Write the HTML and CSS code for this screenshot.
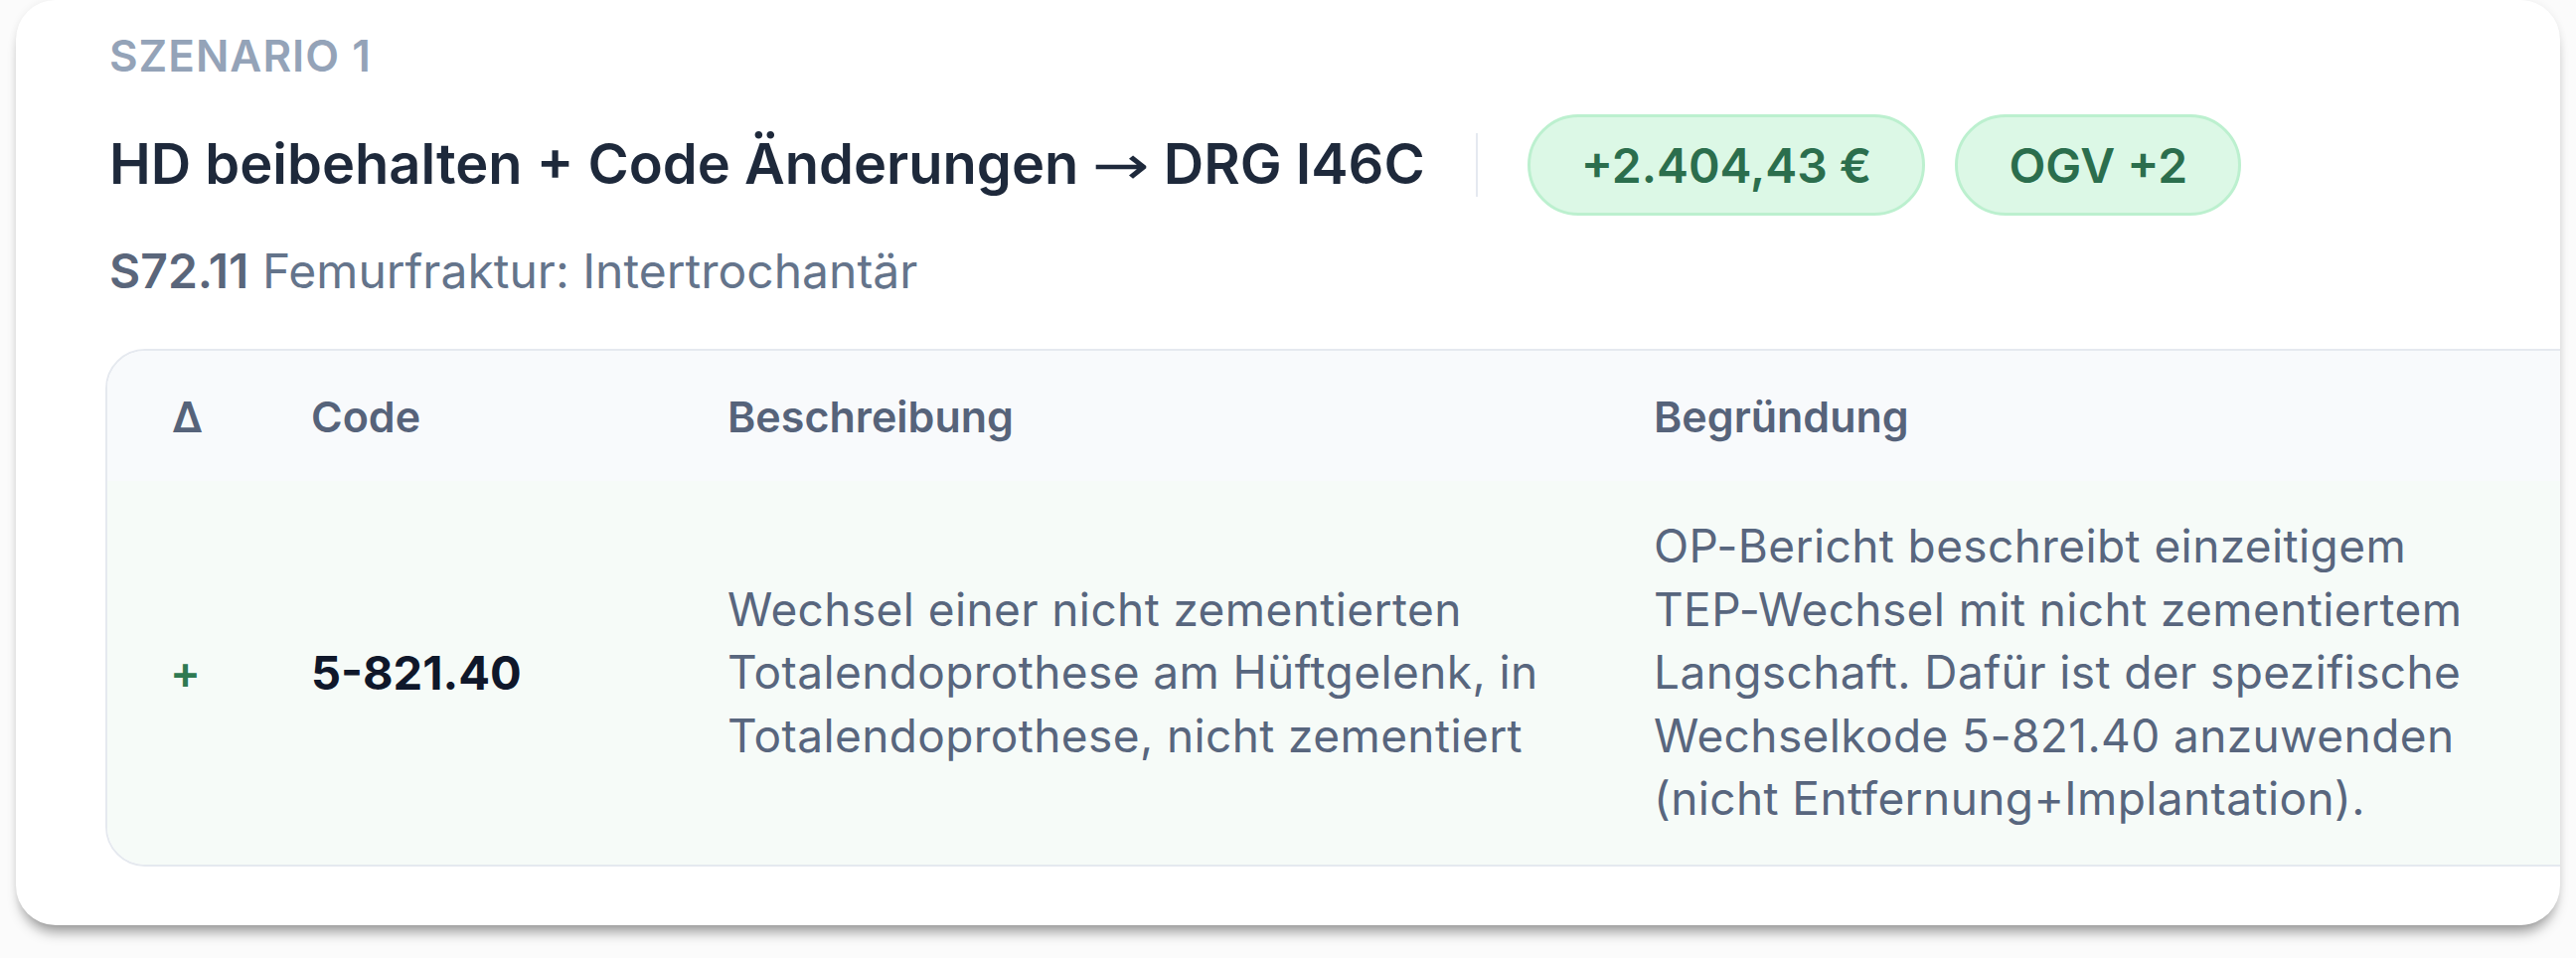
FILE: index.html
```html
<!DOCTYPE html>
<html lang="de">
<head>
<meta charset="utf-8">
<title>Szenario 1</title>
<link rel="stylesheet" href="styles.css">
</head>
<body>
<section class="card">
  <div class="head">
    <div class="eyebrow">SZENARIO 1</div>
    <div class="title-row">
      <h2 class="title">HD beibehalten + Code Änderungen <span class="arrow">→</span> DRG I46C</h2>
      <span class="divider"></span>
      <span class="badge">+2.404,43 €</span>
      <span class="badge">OGV +2</span>
    </div>
    <div class="subtitle"><strong>S72.11</strong> Femurfraktur: Intertrochantär</div>
  </div>
  <div class="table">
    <div class="tr th">
      <div class="cell c-delta">Δ</div>
      <div class="cell c-code">Code</div>
      <div class="cell c-desc">Beschreibung</div>
      <div class="cell c-reason">Begründung</div>
    </div>
    <div class="tr td">
      <div class="cell c-delta plus">+</div>
      <div class="cell c-code code">5-821.40</div>
      <div class="cell c-desc">Wechsel einer nicht zementierten Totalendoprothese am Hüftgelenk, in Totalendoprothese, nicht zementiert</div>
      <div class="cell c-reason">OP-Bericht beschreibt einzeitigem TEP-&#8288;Wechsel mit nicht zementiertem Langschaft. Dafür ist der spezifische Wechselkode 5-821.40 anzuwenden (nicht Entfernung+Implantation).</div>
    </div>
  </div>
</section>
</body>
</html>
```

FILE: styles.css
```css
* { box-sizing: border-box; }
html, body { margin: 0; padding: 0; }
body {
  background: #fbfbfb;
  font-family: Inter, "Noto Sans", "Liberation Sans", sans-serif;
  width: 2592px;
  height: 964px;
  overflow: hidden;
}
.card {
  margin-left: 16px;
  width: 2560px;
  height: 931px;
  background: #ffffff;
  border-radius: 40px;
  box-shadow: 0 12px 14px -6px rgba(0,0,0,0.42), 0 0 8px rgba(0,0,0,0.06);
  padding: 26px 0 0 90px;
  overflow: hidden;
}
.head { padding-left: 4px; }
.eyebrow {
  font-size: 44px;
  line-height: 60px;
  height: 60px;
  font-weight: 600;
  color: #94a3b8;
  letter-spacing: 1px;
}
.title-row {
  margin-top: 29px;
  height: 102px;
  display: flex;
  align-items: center;
}
.title {
  margin: 0;
  font-size: 56px;
  line-height: 72px;
  font-weight: 600;
  color: #1e293b;
  white-space: nowrap;
}
.arrow {
  display: inline-block;
  font-family: "DejaVu Sans", sans-serif;
  font-weight: 400;
  font-size: 54px;
  transform: scaleX(1.28);
  margin: 0 6px;
}
.divider {
  width: 2px;
  height: 64px;
  background: #e5e9f0;
  margin: 0 50px 0 51px;
}
.badge {
  height: 102px;
  display: flex;
  align-items: center;
  padding: 0 51px;
  border-radius: 51px;
  background: #dcf8e6;
  border: 3px solid #bcf0cf;
  color: #2b6e4d;
  font-size: 48px;
  font-weight: 600;
  white-space: nowrap;
  margin-right: 30px;
}
.subtitle {
  margin-top: 24px;
  font-size: 48px;
  line-height: 64px;
  color: #64748b;
  white-space: nowrap;
}
.subtitle strong { font-weight: 600; color: #5a667b; }
.table {
  margin-top: 46px;
  width: 2540px;
  border: 2px solid #e5e9ef;
  border-radius: 40px;
  overflow: hidden;
}
.tr {
  display: grid;
  grid-template-columns: 205px 419px 932px 982px;
}
.th {
  height: 131px;
  background: #f8fafc;
  align-items: center;
  font-size: 43px;
  font-weight: 600;
  color: #56637a;
}
.td {
  height: 386px;
  background: #f6fbf8;
  align-items: center;
  font-size: 46px;
  line-height: 63.5px;
  color: #58667e;
}
.td .c-desc, .td .c-reason { letter-spacing: 0.4px; }
.cell { padding-right: 55px; }
.c-delta { padding-left: 65px; }
.plus { color: #2f7a52; font-weight: 600; font-size: 46px; padding-left: 63px; }
.code { font-size: 47px; font-weight: 700; color: #0f172a; }
.c-reason { padding-right: 99px; }
```
